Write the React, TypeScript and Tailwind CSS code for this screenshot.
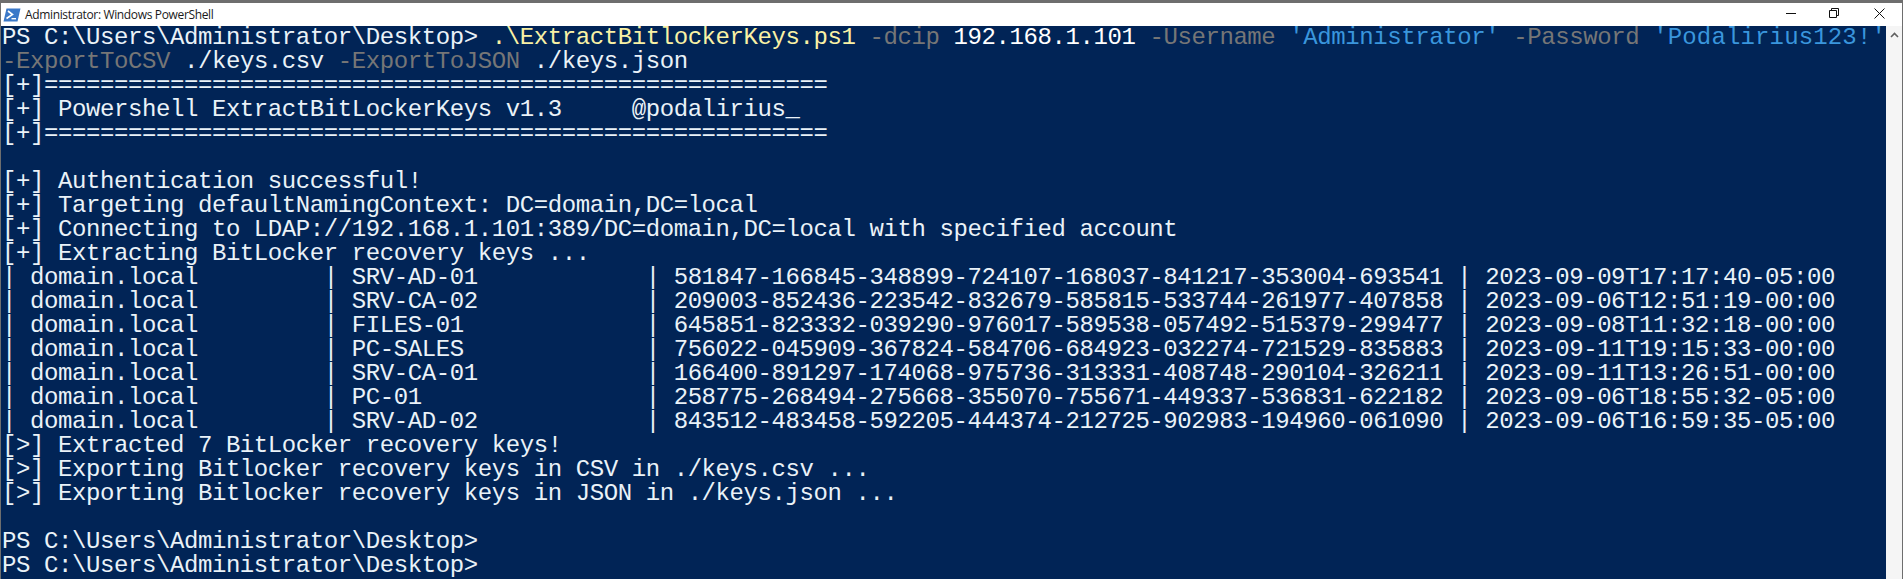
const rows = [
  ["SRV-AD-01", "581847-166845-348899-724107-168037-841217-353004-693541", "2023-09-09T17:17:40-05:00"],
  ["SRV-CA-02", "209003-852436-223542-832679-585815-533744-261977-407858", "2023-09-06T12:51:19-00:00"],
  ["FILES-01", "645851-823332-039290-976017-589538-057492-515379-299477", "2023-09-08T11:32:18-00:00"],
  ["PC-SALES", "756022-045909-367824-584706-684923-032274-721529-835883", "2023-09-11T19:15:33-00:00"],
  ["SRV-CA-01", "166400-891297-174068-975736-313331-408748-290104-326211", "2023-09-11T13:26:51-00:00"],
  ["PC-01", "258775-268494-275668-355070-755671-449337-536831-622182", "2023-09-06T18:55:32-05:00"],
  ["SRV-AD-02", "843512-483458-592205-444374-212725-902983-194960-061090", "2023-09-06T16:59:35-05:00"],
];

const rule = "[+]" + "=".repeat(56);

const before = [
  rule,
  "[+] Powershell ExtractBitLockerKeys v1.3     @podalirius_",
  rule,
  " ",
  "[+] Authentication successful!",
  "[+] Targeting defaultNamingContext: DC=domain,DC=local",
  "[+] Connecting to LDAP://192.168.1.101:389/DC=domain,DC=local with specified account",
  "[+] Extracting BitLocker recovery keys ...",
];

const after = [
  "[>] Extracted 7 BitLocker recovery keys!",
  "[>] Exporting Bitlocker recovery keys in CSV in ./keys.csv ...",
  "[>] Exporting Bitlocker recovery keys in JSON in ./keys.json ...",
  " ",
  "PS C:\\Users\\Administrator\\Desktop>",
  "PS C:\\Users\\Administrator\\Desktop>",
];

function PsIcon() {
  return (
    <svg width="18" height="14" viewBox="0 0 18 14" className="shrink-0">
      <path d="M3.5 0.5H17.5L14.5 13.5H0.5Z" fill="#3a78c8" />
      <path d="M5 3L9.5 6.5L3.5 10.5" fill="none" stroke="#ffffff" strokeWidth="1.6" />
      <path d="M8.5 10.7H13" fill="none" stroke="#ffffff" strokeWidth="1.4" />
    </svg>
  );
}

export default function App() {
  return (
    <div className="h-[579px] w-[1903px] overflow-hidden flex flex-col border-t-[3px] border-r-[1px] border-l-[1px] border-[#6e6e6e] bg-white">
      <div className="h-[23px] shrink-0 flex items-center bg-white">
        <div className="ml-[2px] mr-[4px] flex items-center">
          <PsIcon />
        </div>
        <span className="text-[12px] text-[#1a1a1a] font-['Open_Sans','Noto_Sans',sans-serif] tracking-[-0.35px]">
          Administrator: Windows PowerShell
        </span>
        <div className="ml-auto flex items-center h-full pb-[3px]">
          <svg width="10" height="10" viewBox="0 0 10 10" className="mr-[33px]">
            <path d="M0 5.5H10" stroke="#111111" strokeWidth="1" />
          </svg>
          <svg width="10" height="10" viewBox="0 0 10 10" className="mr-[35px]">
            <path d="M0.5 2.5H7.5V9.5H0.5Z M2.5 2.5V0.5H9.5V7.5H7.5" fill="none" stroke="#111111" strokeWidth="1" />
          </svg>
          <svg width="11" height="11" viewBox="0 0 11 11" className="mr-[17px]">
            <path d="M0.5 0.5L10.5 10.5M10.5 0.5L0.5 10.5" stroke="#111111" strokeWidth="1" />
          </svg>
        </div>
      </div>
      <div className="flex-1 flex min-h-0">
        <div className="flex-1 min-w-0 bg-[#012456] pl-[1px] text-[#eaf2f8] text-[24px] leading-[24px] tracking-[-0.41px] whitespace-pre font-['Liberation_Mono',monospace]">
          <div>
            PS C:\Users\Administrator\Desktop&gt; <span className="text-[#f9f1a5]">.\ExtractBitlockerKeys.ps1</span>{" "}
            <span className="text-[#767676]">-dcip</span> <span className="text-white">192.168.1.101</span>{" "}
            <span className="text-[#767676]">-Username</span> <span className="text-[#3a96dd]">'Administrator'</span>{" "}
            <span className="text-[#767676]">-Password</span>{" "}
            <span className="text-[#3a96dd] tracking-[0.15px]">'Podalirius123!'</span>
          </div>
          <div>
            <span className="text-[#767676]">-ExportToCSV</span> ./keys.csv{" "}
            <span className="text-[#767676]">-ExportToJSON</span> ./keys.json
          </div>
          {before.map((line, i) => (
            <div key={i}>{line}</div>
          ))}
          {rows.map((r) => (
            <div key={r[0]}>
              {"| " + "domain.local".padEnd(20) + " | " + r[0].padEnd(20) + " | " + r[1] + " | " + r[2]}
            </div>
          ))}
          {after.map((line, i) => (
            <div key={i}>{line}</div>
          ))}
        </div>
        <div className="w-[16px] shrink-0 bg-[#f5f5f5] flex justify-center pt-[6px]">
          <svg width="9" height="6" viewBox="0 0 9 6">
            <path d="M1 5L4.5 1.5L8 5" fill="none" stroke="#606060" strokeWidth="1.6" />
          </svg>
        </div>
      </div>
    </div>
  );
}
